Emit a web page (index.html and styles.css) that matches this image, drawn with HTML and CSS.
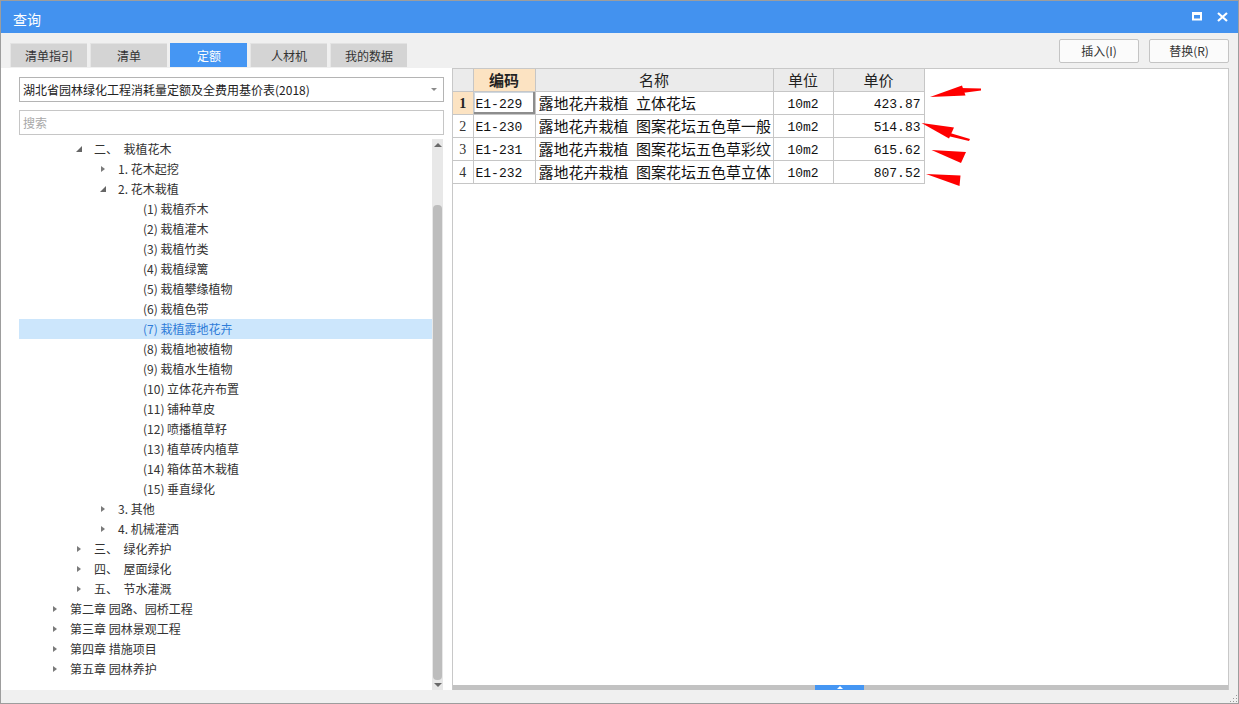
FILE: index.html
```html
<!DOCTYPE html>
<html lang="zh-CN">
<head>
<meta charset="utf-8">
<title>查询</title>
<link rel="stylesheet" href="styles.css">
</head>
<body>
<div class="window">
  <div class="titlebar">
    <span class="title">查询</span>
    <div class="win-ctrls">
      <svg class="ic" width="10" height="9" viewBox="0 0 10 9"><rect x="1" y="1.5" width="8" height="6" fill="none" stroke="#fff" stroke-width="2"/><rect x="0" y="0" width="10" height="3" fill="#fff"/></svg>
      <svg class="ic" width="11" height="10" viewBox="0 0 11 10"><path d="M1 1 L10 9 M10 1 L1 9" stroke="#fff" stroke-width="2.2" fill="none"/></svg>
    </div>
  </div>

  <div class="toolbar">
    <div class="tabs">
      <div class="tab">清单指引</div>
      <div class="tab">清单</div>
      <div class="tab active">定额</div>
      <div class="tab">人材机</div>
      <div class="tab">我的数据</div>
    </div>
    <div class="btns">
      <button class="btn">插入(I)</button>
      <button class="btn">替换(R)</button>
    </div>
  </div>

  <div class="main">
    <div class="left">
      <div class="select"><span>湖北省园林绿化工程消耗量定额及全费用基价表(2018)</span><span class="caret"></span></div>
      <div class="search">搜索</div>
      <div class="treewrap">
        <div class="tree">
          <div class="row l2"><span class="exp open"></span><span>二、&nbsp;&nbsp;栽植花木</span></div>
          <div class="row l3"><span class="exp closed"></span><span>1. 花木起挖</span></div>
          <div class="row l3"><span class="exp open"></span><span>2. 花木栽植</span></div>
          <div class="row l4"><span class="exp"></span><span>(1) 栽植乔木</span></div>
          <div class="row l4"><span class="exp"></span><span>(2) 栽植灌木</span></div>
          <div class="row l4"><span class="exp"></span><span>(3) 栽植竹类</span></div>
          <div class="row l4"><span class="exp"></span><span>(4) 栽植绿篱</span></div>
          <div class="row l4"><span class="exp"></span><span>(5) 栽植攀缘植物</span></div>
          <div class="row l4"><span class="exp"></span><span>(6) 栽植色带</span></div>
          <div class="row l4 selected"><span class="exp"></span><span>(7) 栽植露地花卉</span></div>
          <div class="row l4"><span class="exp"></span><span>(8) 栽植地被植物</span></div>
          <div class="row l4"><span class="exp"></span><span>(9) 栽植水生植物</span></div>
          <div class="row l4"><span class="exp"></span><span>(10) 立体花卉布置</span></div>
          <div class="row l4"><span class="exp"></span><span>(11) 铺种草皮</span></div>
          <div class="row l4"><span class="exp"></span><span>(12) 喷播植草籽</span></div>
          <div class="row l4"><span class="exp"></span><span>(13) 植草砖内植草</span></div>
          <div class="row l4"><span class="exp"></span><span>(14) 箱体苗木栽植</span></div>
          <div class="row l4"><span class="exp"></span><span>(15) 垂直绿化</span></div>
          <div class="row l3"><span class="exp closed"></span><span>3. 其他</span></div>
          <div class="row l3"><span class="exp closed"></span><span>4. 机械灌洒</span></div>
          <div class="row l2"><span class="exp closed"></span><span>三、&nbsp;&nbsp;绿化养护</span></div>
          <div class="row l2"><span class="exp closed"></span><span>四、&nbsp;&nbsp;屋面绿化</span></div>
          <div class="row l2"><span class="exp closed"></span><span>五、&nbsp;&nbsp;节水灌溉</span></div>
          <div class="row l1"><span class="exp closed"></span><span>第二章 园路、园桥工程</span></div>
          <div class="row l1"><span class="exp closed"></span><span>第三章 园林景观工程</span></div>
          <div class="row l1"><span class="exp closed"></span><span>第四章 措施项目</span></div>
          <div class="row l1"><span class="exp closed"></span><span>第五章 园林养护</span></div>
        </div>
        <div class="vscroll">
          <span class="arr-up"></span>
          <div class="vthumb"></div>
          <span class="arr-down"></span>
        </div>
      </div>
    </div>

    <div class="right">
      <div class="grid-area">
        <table class="grid">
          <colgroup><col class="c-no"><col class="c-code"><col class="c-name"><col class="c-unit"><col class="c-price"></colgroup>
          <thead>
            <tr><th class="corner"><div class="cell"></div></th><th class="hl"><div class="cell">编码</div></th><th><div class="cell">名称</div></th><th><div class="cell">单位</div></th><th><div class="cell">单价</div></th></tr>
          </thead>
          <tbody>
            <tr><td class="no cur"><div class="cell">1</div></td><td class="code focus"><div class="cell m">E1-229</div></td><td class="name"><div class="cell">露地花卉栽植&ensp;立体花坛</div></td><td class="unit"><div class="cell m">10m2</div></td><td class="price"><div class="cell m">423.87</div></td></tr>
            <tr><td class="no"><div class="cell">2</div></td><td class="code"><div class="cell m">E1-230</div></td><td class="name"><div class="cell">露地花卉栽植&ensp;图案花坛五色草一般</div></td><td class="unit"><div class="cell m">10m2</div></td><td class="price"><div class="cell m">514.83</div></td></tr>
            <tr><td class="no"><div class="cell">3</div></td><td class="code"><div class="cell m">E1-231</div></td><td class="name"><div class="cell">露地花卉栽植&ensp;图案花坛五色草彩纹</div></td><td class="unit"><div class="cell m">10m2</div></td><td class="price"><div class="cell m">615.62</div></td></tr>
            <tr><td class="no"><div class="cell">4</div></td><td class="code"><div class="cell m">E1-232</div></td><td class="name"><div class="cell">露地花卉栽植&ensp;图案花坛五色草立体</div></td><td class="unit"><div class="cell m">10m2</div></td><td class="price"><div class="cell m">807.52</div></td></tr>
          </tbody>
        </table>
      </div>
      <div class="hscroll"><div class="hthumb"><span class="hup"></span></div></div>
    </div>
  </div>

  <div class="bottom"><span class="grip"></span></div>

  <svg class="annot" width="1239" height="704" viewBox="0 0 1239 704">
    <polygon points="930,97 962,85.5 965.5,95.5" fill="#f00"/>
    <polygon points="960,88 981,88.5 981,90.5 962,93" fill="#f00"/>
    <polygon points="921.5,123 954,127.5 949,138.5" fill="#f00"/>
    <polygon points="950,133 970,139 969,141 948,136" fill="#f00"/>
    <polygon points="931.5,150 966,152 961,163" fill="#f00"/>
    <polygon points="926,174 960.5,175.5 959.5,186" fill="#f00"/>
  </svg>
</div>
</body>
</html>
```

FILE: styles.css
```css
* { box-sizing: border-box; }
html, body { margin: 0; padding: 0; }
body {
  width: 1239px;
  height: 704px;
  overflow: hidden;
  font-family: "Noto Sans CJK SC", "Microsoft YaHei", sans-serif;
  font-size: 12px;
  color: #333;
}
.window {
  position: relative;
  width: 1239px;
  height: 704px;
  border: 1px solid #9d9d9d;
  background: #f0f0f0;
  display: flex;
  flex-direction: column;
}
.titlebar {
  height: 32px;
  flex: none;
  background: #4392ef;
  color: #fff;
  display: flex;
  align-items: center;
  justify-content: space-between;
  padding: 3px 10px 0 12px;
}
.title { font-size: 14px; line-height: 20px; }
.win-ctrls { display: flex; align-items: center; gap: 15px; margin-top: -4px; }
.ic { display: block; }

.toolbar {
  height: 35px;
  flex: none;
  display: flex;
  justify-content: space-between;
  padding: 0 9px 0 9px;
}
.tabs { display: flex; align-items: flex-end; gap: 3px; padding-bottom: 1px; }
.tab {
  width: 77px;
  height: 24px;
  background: #d4d4d4;
  border-top: 1px solid #e2e2e2;
  border-left: 1px solid #e6e6e6;
  color: #333;
  display: flex;
  align-items: center;
  justify-content: center;
  line-height: 16px;
}
.tab.active { background: #4596f3; color: #fff; border-color: #4596f3; }
.btns { display: flex; gap: 10px; padding-top: 6px; }
.btn {
  width: 80px;
  height: 24px;
  border: 1px solid #c4c4c4;
  border-radius: 2px;
  background: #fbfbfb;
  font-family: inherit;
  font-size: 12px;
  color: #333;
  padding: 0;
  line-height: 16px;
}

.main { height: 622px; flex: none; display: flex; padding-right: 9px; }

.left {
  width: 451px;
  flex: none;
  background: #fff;
  padding: 9px 8px 0 18px;
  display: flex;
  flex-direction: column;
}
.select {
  height: 25px;
  border: 1px solid #b4b4b4;
  display: flex;
  align-items: center;
  justify-content: space-between;
  padding: 0 6px 0 3px;
  color: #222;
  line-height: 16px;
}
.caret {
  width: 0; height: 0;
  border-left: 3px solid transparent;
  border-right: 3px solid transparent;
  border-top: 3px solid #8a8a8a;
}
.search {
  height: 25px;
  margin-top: 8px;
  border: 1px solid #c6c6c6;
  color: #a8a8a8;
  padding: 0 3px;
  display: flex;
  align-items: center;
  line-height: 16px;
}
.treewrap { flex: 1; margin-top: 4px; display: flex; min-height: 0; }
.tree { width: 413px; flex: none; }
.row {
  height: 20px;
  display: flex;
  align-items: center;
  line-height: 20px;
  white-space: nowrap;
  color: #333;
}
.row.l1 { padding-left: 33px; }
.row.l2 { padding-left: 57px; }
.row.l3 { padding-left: 81px; }
.row.l4 { padding-left: 106px; }
.row.selected { background: #cce6fc; color: #2f7cd8; }
.exp { width: 18px; height: 20px; flex: none; position: relative; }
.exp.closed::before {
  content: "";
  position: absolute;
  left: 1px; top: 6.5px;
  border-left: 4px solid #7a7a7a;
  border-top: 3.5px solid transparent;
  border-bottom: 3.5px solid transparent;
}
.exp.open::before {
  content: "";
  position: absolute;
  left: 0; top: 7px;
  border-bottom: 6px solid #666;
  border-left: 6px solid transparent;
}
.vscroll {
  width: 11px;
  flex: none;
  background: #e8e8e8;
  display: flex;
  flex-direction: column;
  align-items: center;
  padding: 4px 0 3px;
}
.arr-up, .arr-down {
  width: 0; height: 0;
  border-left: 4px solid transparent;
  border-right: 4px solid transparent;
  flex: none;
}
.arr-up { border-bottom: 4px solid #6a6a6a; }
.arr-down { border-top: 4px solid #6a6a6a; margin-top: 3px; }
.vthumb {
  width: 9px;
  margin-top: 58px;
  flex: 1;
  background: #bdbdbd;
  border-radius: 4px;
}

.right {
  width: 777px;
  flex: none;
  background: #fff;
  border: 1px solid #c8c8c8;
  border-bottom: none;
  display: flex;
  flex-direction: column;
}
.grid-area { flex: 1; }
.grid {
  border-collapse: collapse;
  table-layout: fixed;
  width: 471px;
  color: #111;
}
.c-no { width: 20px; }
.c-code { width: 62px; }
.c-name { width: 238px; }
.c-unit { width: 60px; }
.c-price { width: 91px; }
.grid th, .grid td {
  padding: 0;
  border-right: 1px solid #c6c6c6;
  border-bottom: 1px solid #c6c6c6;
  white-space: nowrap;
  vertical-align: top;
}
.cell {
  height: 22px;
  line-height: 22px;
  overflow: hidden;
  white-space: nowrap;
}
.grid th {
  background: #ebebeb;
  font-weight: normal;
  font-size: 15px;
  color: #222;
  text-align: center;
}
.grid th.hl { background: #fce3c2; font-weight: bold; }
.grid td { font-size: 15px; }
.cell.m {
  font-family: "Liberation Mono", "DejaVu Sans Mono", monospace;
  font-size: 13px;
  line-height: 25px;
}
.grid td.no .cell {
  text-align: center;
  font-family: "Liberation Serif", serif;
  font-size: 14px;
  line-height: 24px;
  color: #333;
}
.grid td.no.cur { background: #fce3c2; }
.grid td.no.cur .cell { font-weight: bold; color: #222; }
.grid td.code { padding-left: 2px; }
.grid td.focus { box-shadow: inset -2px -2px 0 #8d8d8d, inset 1px 1px 0 #cfd8e0; }
.grid td.name { padding-left: 3px; }
.grid td.unit { text-align: center; }
.grid td.price { text-align: right; padding-right: 3px; }

.hscroll {
  height: 5px;
  flex: none;
  background: #c2c2c2;
  position: relative;
}
.hthumb {
  position: absolute;
  left: 362px;
  top: 0;
  width: 49px;
  height: 5px;
  background: #4596f3;
  display: flex;
  justify-content: center;
  align-items: center;
}
.hup {
  width: 0; height: 0;
  border-left: 3px solid transparent;
  border-right: 3px solid transparent;
  border-bottom: 3px solid #fff;
}

.bottom { flex: 1; position: relative; }
.grip {
  position: absolute;
  right: 1px;
  bottom: 1px;
  width: 8px;
  height: 8px;
  background:
    radial-gradient(circle, #999 0.9px, transparent 1px) 0 0 / 3px 3px;
  clip-path: polygon(100% 0, 100% 100%, 0 100%);
}

.annot { position: absolute; left: -1px; top: -1px; pointer-events: none; }
```
